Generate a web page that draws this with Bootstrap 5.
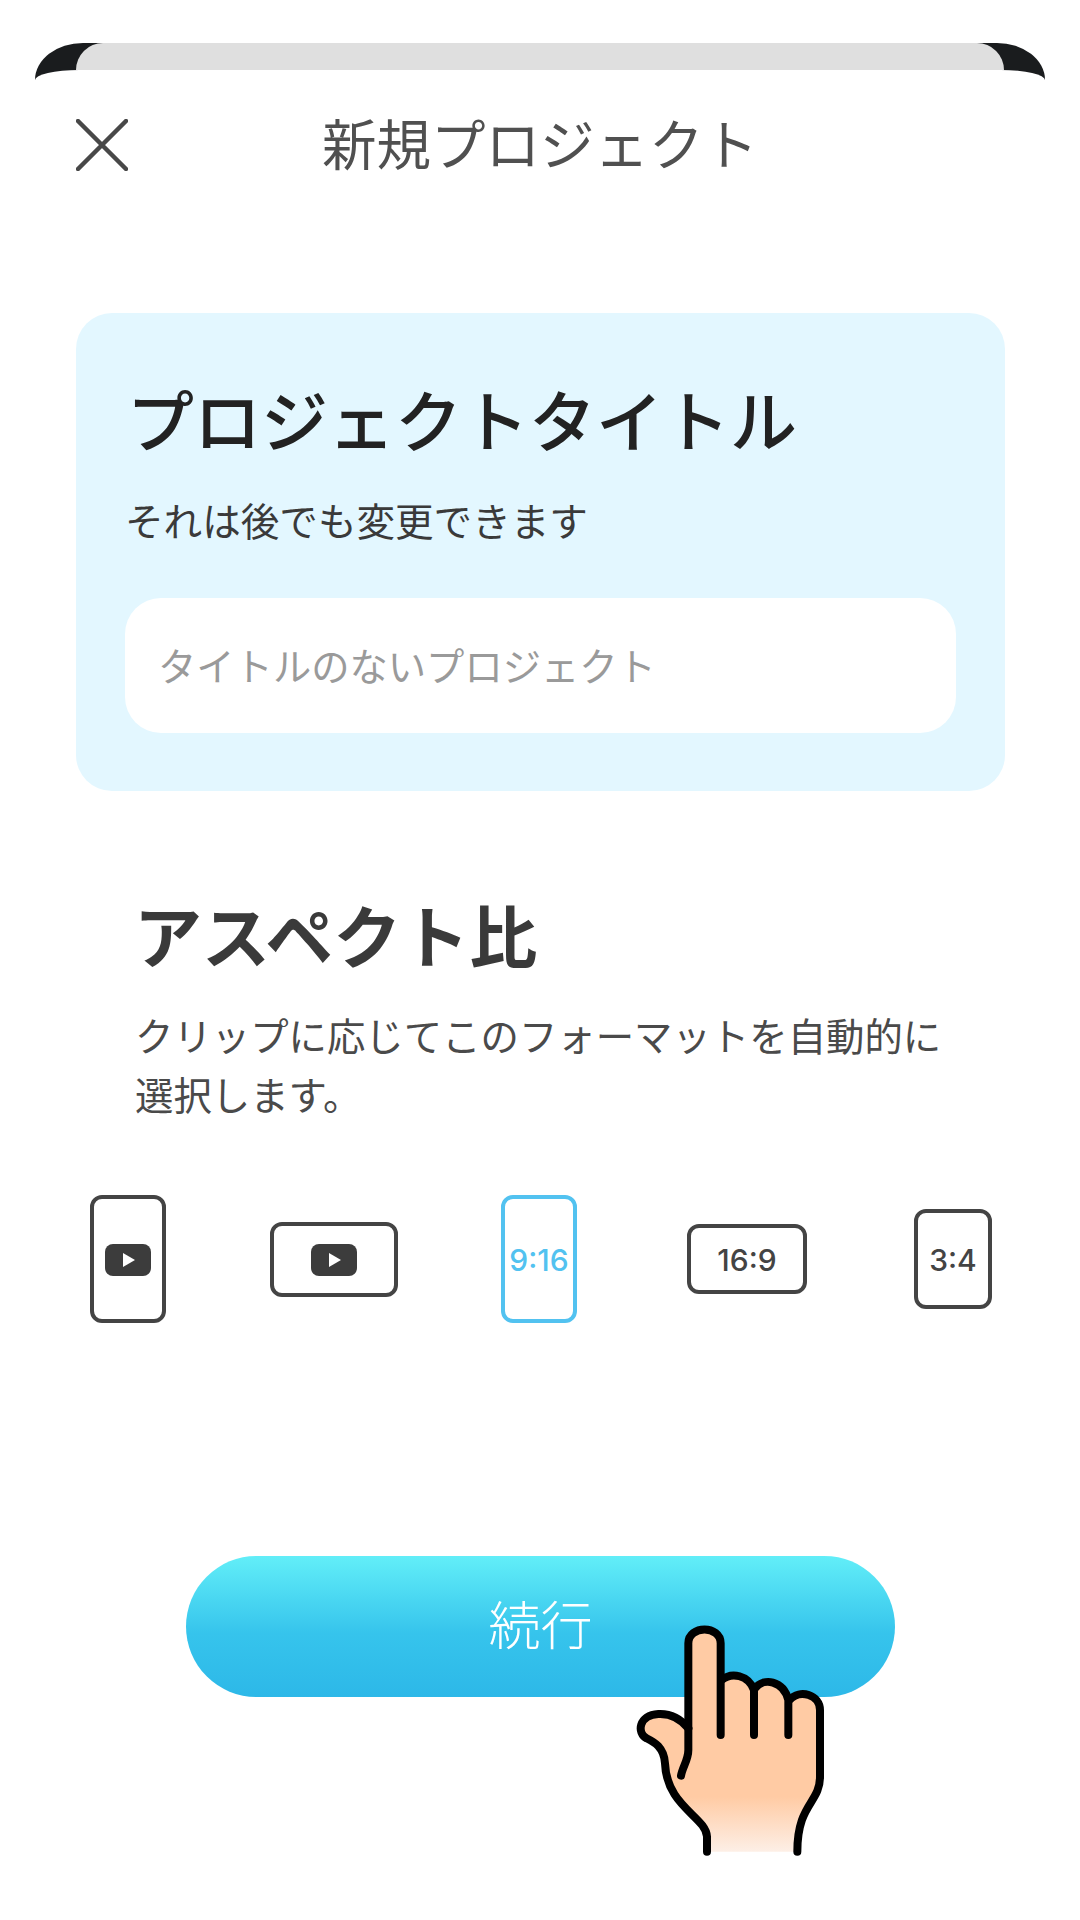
<!DOCTYPE html>
<html lang="ja">
<head>
  <meta charset="UTF-8">
  <meta name="viewport" content="width=device-width, initial-scale=1.0">
  <title>新規プロジェクト</title>
  <link href="https://cdn.jsdelivr.net/npm/bootstrap@5.3.0/dist/css/bootstrap.min.css" rel="stylesheet">
  <style>
    body {
      background: #fff;
      font-family: "Noto Sans CJK JP", "Liberation Sans", sans-serif;
      color: #333;
    }

    .phone {
      width: 1080px;
      height: 1920px;
      padding-top: 43px;
      position: relative;
      overflow: hidden;
    }

    .sheet-back {
      height: 37px;
      margin: 0 35px;
      background: #1a1c1e;
      border-radius: 48px 48px 0 0 / 37px 37px 0 0;
      padding: 0 41px;
    }

    .sheet-mid {
      height: 27px;
      background: #dfdfdf;
      border-radius: 27px 27px 0 0;
    }

    .sheet-cap {
      height: 10px;
      margin: -10px 35px 0;
      background: #fff;
      border-radius: 44px 44px 0 0 / 10px 10px 0 0;
      position: relative;
    }

    .top-row {
      height: 130px;
      padding: 0 76px;
      display: grid;
      grid-template-columns: 1fr auto 1fr;
      align-items: center;
    }

    .top-title {
      font-size: 54.5px;
      font-weight: 400;
      color: #505050;
      line-height: 1;
      padding-bottom: 5px;
    }

    .title-card {
      margin: 103px 75px 0 76px;
      height: 478px;
      background: #e3f7ff;
      border-radius: 36px;
      padding: 65px 49px 0 48px;
    }

    .title-card h2 {
      font-size: 67px;
      font-weight: 500;
      color: #222;
      line-height: 80px;
      margin: 0 0 36px 3px;
    }

    .title-card p {
      font-size: 38.6px;
      color: #3a3a3a;
      line-height: 50px;
      margin: 0 0 54px 1px;
    }

    .title-input.form-control {
      height: 135px;
      width: 831px;
      margin-left: 1px;
      border: 0;
      border-radius: 36px;
      padding: 0 33px 3px;
      font-size: 38.3px;
      font-family: inherit;
      box-shadow: none;
    }

    .title-input::placeholder {
      color: #9a9a9a;
      opacity: 1;
    }

    .aspect-block {
      margin: 98px 130px 0 135px;
    }

    .aspect-block h2 {
      font-size: 68px;
      font-weight: 700;
      color: #3a3a3a;
      line-height: 90px;
      margin: 0 0 26px -1px;
    }

    .aspect-block p {
      font-size: 38.4px;
      color: #4a4a4a;
      line-height: 59px;
      margin: 0;
    }

    .ratio-row {
      margin: 72px 88px 0 90px;
    }

    .ratio-box {
      border: 4px solid #444;
      border-radius: 12px;
      font-family: "Inter", "Liberation Sans", sans-serif;
      font-size: 30px;
      font-weight: 500;
      color: #444;
      line-height: 1;
      padding-top: 2px;
    }

    .ratio-box.active-ratio {
      border-color: #52c2f0;
      color: #52c2f0;
    }

    .r-tall { width: 76px; height: 128px; }
    .r-wide { width: 128px; height: 75px; margin-left: 104px; }
    .active-ratio { margin-left: 103px; }
    .r-169 { width: 120px; height: 70px; margin-left: 110px; }
    .r-34 { width: 78px; height: 100px; margin-left: 107px; }

    .next-btn.btn {
      position: absolute;
      left: 186px;
      top: 1556px;
      width: 709px;
      height: 141px;
      border: 0;
      border-radius: 71px;
      background: linear-gradient(180deg, #62eef8 0%, #36c4ec 55%, #2db8e8 100%);
      color: #fff;
      font-size: 52px;
      font-weight: 300;
      padding: 0 0 8px;
    }

    .hand {
      position: absolute;
      left: 600px;
      top: 1600px;
    }
  </style>
</head>
<body>

  <div class="phone">
    <div class="sheet-back">
      <div class="sheet-mid"></div>
    </div>
    <div class="sheet-cap"></div>

    <div class="top-row">
      <svg width="52" height="52" viewBox="0 0 52 52" fill="none" stroke="#484848" stroke-width="4.5" stroke-linecap="round">
        <path d="M2 2L50 50M50 2L2 50"/>
      </svg>
      <div class="top-title">新規プロジェクト</div>
      <div></div>
    </div>

    <div class="title-card">
      <h2>プロジェクトタイトル</h2>
      <p>それは後でも変更できます</p>
      <input class="form-control title-input" type="text" placeholder="タイトルのないプロジェクト">
    </div>

    <div class="aspect-block">
      <h2>アスペクト比</h2>
      <p>クリップに応じてこのフォーマットを自動的に選択します。</p>
    </div>

    <div class="ratio-row d-flex align-items-center">
      <div class="ratio-box r-tall d-flex align-items-center justify-content-center">
        <svg width="46" height="32" viewBox="0 0 46 32"><rect width="46" height="32" rx="8" fill="#3c3c3c"/><path d="M18 9L30 16L18 23Z" fill="#fff"/></svg>
      </div>
      <div class="ratio-box r-wide d-flex align-items-center justify-content-center">
        <svg width="46" height="32" viewBox="0 0 46 32"><rect width="46" height="32" rx="8" fill="#3c3c3c"/><path d="M18 9L30 16L18 23Z" fill="#fff"/></svg>
      </div>
      <div class="ratio-box r-tall active-ratio d-flex align-items-center justify-content-center">9:16</div>
      <div class="ratio-box r-169 d-flex align-items-center justify-content-center">16:9</div>
      <div class="ratio-box r-34 d-flex align-items-center justify-content-center">3:4</div>
    </div>

    <button class="btn next-btn" type="button">続行</button>

    <svg class="hand" width="260" height="280" viewBox="0 0 780 840">
      <defs>
        <linearGradient id="skin" gradientUnits="userSpaceOnUse" x1="0" y1="590" x2="0" y2="760">
          <stop offset="0" stop-color="#ffcba4"/>
          <stop offset="1" stop-color="#fdf0e8"/>
        </linearGradient>
      </defs>
      <path fill="url(#skin)" d="M321 755V710C318 650 200 620 195 490C192 440 160 425 140 415C110 400 115 345 175 342C215 340 245 360 265 385V130C265 75 362 75 362 130V240C385 215 440 225 462 270C480 240 545 240 565 310C590 270 660 280 660 330V530C660 610 592 610 592 755Z"/>
      <g fill="none" stroke="#000" stroke-width="24" stroke-linecap="round" stroke-linejoin="round">
        <path d="M321 755V710C318 650 200 620 195 490C192 440 160 425 140 415C110 400 115 345 175 342C215 340 245 360 265 385"/>
        <path d="M243 527C248 500 265 480 265 450V130C265 75 362 75 362 130V405"/>
        <path d="M365 240C395 215 445 225 462 270V405"/>
        <path d="M465 265C490 232 550 240 565 300V405"/>
        <path d="M568 300C600 265 660 285 660 330V530C660 610 592 610 592 755"/>
      </g>
    </svg>
  </div>

  <script src="https://cdn.jsdelivr.net/npm/bootstrap@5.3.0/dist/js/bootstrap.bundle.min.js"></script>
</body>
</html>
